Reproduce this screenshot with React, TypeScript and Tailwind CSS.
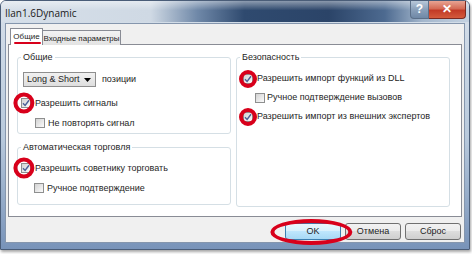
import React from "react";

function Check() {
  return (
    <svg width="8" height="8" viewBox="0 0 8 8" className="block">
      <path d="M1 4.3 L3.1 6.4 L7 1.3" fill="none" stroke="#4a5f97" strokeWidth="1.4" />
    </svg>
  );
}

function Box({ checked, circle }: { checked?: boolean; circle?: "lg" | "sm" }) {
  return (
    <span className="relative flex h-[10px] w-[10px] shrink-0 items-center justify-center border border-[#8e8f8f] bg-[linear-gradient(135deg,#d2d2d2,#fbfbfb)]">
      {checked && <Check />}
      {circle === "lg" && (
        <span className="pointer-events-none absolute left-1/2 top-1/2 z-10 h-[21px] w-[21px] -translate-x-[60%] -translate-y-1/2 rounded-full border-[4px] border-[#d8001b]" />
      )}
      {circle === "sm" && (
        <span className="pointer-events-none absolute left-1/2 top-1/2 z-10 h-[18px] w-[18px] -translate-x-1/2 -translate-y-1/2 rounded-full border-[4px] border-[#d8001b]" />
      )}
    </span>
  );
}

function Row({
  label,
  checked,
  circle,
  pl,
  gap,
  h,
}: {
  label: string;
  checked?: boolean;
  circle?: "lg" | "sm";
  pl: string;
  gap: string;
  h: string;
}) {
  return (
    <div className={`flex items-center ${pl} ${gap} ${h}`}>
      <Box checked={checked} circle={circle} />
      <span className="whitespace-nowrap">{label}</span>
    </div>
  );
}

function Btn({ label, primary }: { label: string; primary?: boolean }) {
  return (
    <div className="relative">
      <div
        className={
          primary
            ? "flex h-[17px] w-[56px] items-center justify-center rounded-[3px] border border-[#3c7fb1] bg-[linear-gradient(to_bottom,#eaf6fd_0%,#d9f0fc_45%,#bee6fd_50%,#a7d9f5_100%)]"
            : "flex h-[17px] w-[56px] items-center justify-center rounded-[3px] border border-[#707070] bg-[linear-gradient(to_bottom,#f2f2f2_0%,#ebebeb_45%,#dddddd_50%,#cfcfcf_100%)]"
        }
      >
        {label}
      </div>
      {primary && (
        <span className="pointer-events-none absolute left-1/2 top-1/2 z-10 h-[26px] w-[82px] -translate-x-[52%] -translate-y-1/2 rounded-[50%] border-[4px] border-[#d8001b]" />
      )}
    </div>
  );
}

export default function App() {
  return (
    <div className="h-[254px] w-[472px] overflow-hidden bg-white font-['Liberation_Sans',Arial,sans-serif] text-[9px] leading-[11px] text-[#1e1e1e]">
      <div className="flex h-[250px] w-[470px] flex-col rounded-t-[6px] border border-[#4a5d78] bg-[linear-gradient(to_bottom,#d7e0ea_0%,#b8c9dc_55%,#7893b9_100%)] shadow-[1px_2px_3px_rgba(0,0,0,0.35)]">
        {/* title bar */}
        <div className="flex h-[21px] shrink-0 items-start rounded-t-[5px] bg-[linear-gradient(to_bottom,rgba(255,255,255,0.45)_0%,rgba(255,255,255,0)_45%),linear-gradient(to_right,#d6dfe9_0%,#cfd9e4_32%,#6f88a8_42%,#2f4a6f_52%,#2b4468_70%,#4d6a90_82%,#a3b6cc_90%,#c4d2e1_100%)]">
          <span className="ml-[4px] mt-[6px] text-[10px] leading-[12px] text-[#1a1a1a] font-['Open_Sans','Liberation_Sans',sans-serif]">
            Ilan1.6Dynamic
          </span>
          <div className="ml-auto mr-[3px] flex">
            <div className="flex h-[18px] w-[19px] items-center justify-center rounded-bl-[4px] border border-t-0 border-[#5b6f88] bg-[linear-gradient(to_bottom,#b9c8d9,#8aa0ba_50%,#6f88a6)] text-[12px] font-bold text-white">
              ?
            </div>
            <div className="flex h-[18px] w-[37px] items-center justify-center rounded-br-[4px] border border-l-0 border-t-0 border-[#7a2a22] bg-[linear-gradient(to_bottom,#e8a493,#d46a55_45%,#c23a26_55%,#d45a3c)] text-[12px] font-bold text-white">
              ✕
            </div>
          </div>
        </div>

        {/* client area */}
        <div className="mx-[4px] mb-[6px] mt-[1px] flex flex-1 flex-col border border-[#8596ad] bg-[#f0f0f0]">
          {/* tabs */}
          <div className="relative z-10 -mb-px ml-[4px] mt-[4px] flex items-end text-[8px]">
            <div className="relative flex h-[17px] w-[33px] items-center justify-center border border-b-0 border-[#898c95] bg-white pb-[1px]">
              Общие
              <span className="absolute bottom-[1px] left-[3px] h-[2px] w-[27px] rounded-full bg-[#d8001b]" />
            </div>
            <div className="flex h-[15px] w-[78px] items-center justify-center border border-b-0 border-l-0 border-[#898c95] bg-[linear-gradient(to_bottom,#f3f3f3,#e3e3e3)]">
              Входные параметры
            </div>
          </div>

          {/* panel */}
          <div className="mx-[2px] flex h-[173px] gap-[5px] border border-[#898c95] bg-white pl-[8px] pt-[7px]">
            {/* left column */}
            <div className="flex w-[214px] flex-col gap-[8px]">
              <fieldset className="h-[82px] rounded-[3px] border border-[#d5dfe5]">
                <legend className="ml-[3px] px-[2px]">Общие</legend>
                <div className="flex flex-col">
                  <div className="ml-[5px] mt-[9px] flex h-[15px] items-center gap-[6px]">
                    <div className="flex h-[15px] w-[73px] items-center justify-between border border-[#8e8e8e] bg-[linear-gradient(to_bottom,#f1f1f1,#dedede)] pl-[3px] pr-[4px]">
                      <span>Long &amp; Short</span>
                      <svg width="7" height="4" viewBox="0 0 7 4">
                        <path d="M0 0 H7 L3.5 4 Z" fill="#000" />
                      </svg>
                    </div>
                    <span>позиции</span>
                  </div>
                  <div className="mt-[6px]">
                    <Row label="Разрешить сигналы" checked circle="lg" pl="pl-[3px]" gap="gap-[4px]" h="h-[20px]" />
                    <Row label="Не повторять сигнал" pl="pl-[17px]" gap="gap-[3px]" h="h-[20px]" />
                  </div>
                </div>
              </fieldset>
              <fieldset className="h-[63px] rounded-[3px] border border-[#d5dfe5]">
                <legend className="ml-[3px] px-[2px]">Автоматическая торговля</legend>
                <div className="mt-[5px] flex flex-col">
                  <Row label="Разрешить советнику торговать" checked circle="lg" pl="pl-[3px]" gap="gap-[4px]" h="h-[20px]" />
                  <Row label="Ручное подтверждение" pl="pl-[16px]" gap="gap-[3px]" h="h-[20px]" />
                </div>
              </fieldset>
            </div>

            {/* right column */}
            <fieldset className="h-[155px] w-[214px] rounded-[3px] border border-[#d5dfe5]">
              <legend className="ml-[3px] px-[2px]">Безопасность</legend>
              <div className="mt-[6px] flex flex-col">
                <Row label="Разрешить импорт функций из DLL" checked circle="sm" pl="pl-[6px]" gap="gap-[4px]" h="h-[19px]" />
                <Row label="Ручное подтверждение вызовов" pl="pl-[18px]" gap="gap-[2px]" h="h-[19px]" />
                <Row label="Разрешить импорт из внешних экспертов" checked circle="sm" pl="pl-[6px]" gap="gap-[4px]" h="h-[19px]" />
              </div>
            </fieldset>
          </div>

          {/* buttons */}
          <div className="mr-[3px] mt-[6px] flex justify-end gap-[4px]">
            <Btn label="OK" primary />
            <Btn label="Отмена" />
            <Btn label="Сброс" />
          </div>
        </div>
      </div>
    </div>
  );
}
